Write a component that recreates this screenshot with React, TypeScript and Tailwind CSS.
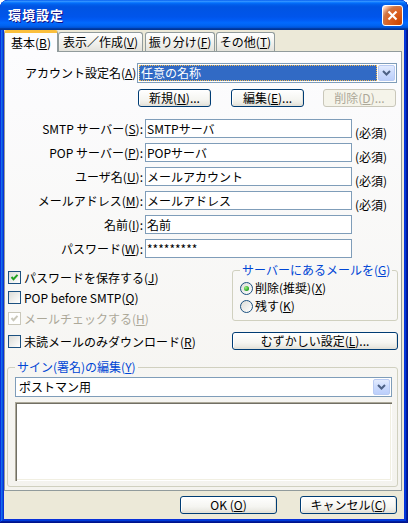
import React from "react";

const U = ({ c }: { c: string }) => <span className="underline underline-offset-[1px]">{c}</span>;

const Chevron = () => (
  <svg width="9" height="6" viewBox="0 0 9 6">
    <polyline points="1,1 4.5,4.5 8,1" fill="none" stroke="#4d6185" strokeWidth="2" />
  </svg>
);

const DropBtn = () => (
  <div className="w-[17px] h-full rounded-[2px] border border-[#b9cbf3] bg-[linear-gradient(to_bottom,#e3ecfe,#cddcfd_45%,#bccffb)] flex items-center justify-center">
    <Chevron />
  </div>
);

const Btn = ({ children, w, disabled, cls = "" }: { children: React.ReactNode; w: string; disabled?: boolean; cls?: string }) => (
  <div
    className={
      disabled
        ? `${w} ${cls} h-[18px] rounded-[3px] border border-[#c9c7ba] bg-[#f5f4ea] text-[#aca899] flex items-center justify-center leading-[14px] whitespace-nowrap`
        : `${w} ${cls} h-[18px] rounded-[3px] border border-[#003c74] bg-[linear-gradient(to_bottom,#ffffff,#f5f5f1_60%,#e9e8e1_88%,#d8d3c8)] shadow-[inset_-1px_-1px_#e3e2da,inset_1px_1px_#ffffff] flex items-center justify-center leading-[14px] whitespace-nowrap`
    }
  >
    {children}
  </div>
);

const Check = ({ checked, disabled }: { checked?: boolean; disabled?: boolean }) => (
  <div
    className={
      disabled
        ? "w-[13px] h-[13px] shrink-0 border border-[#cac8bb] bg-white flex items-center justify-center"
        : "w-[13px] h-[13px] shrink-0 border border-[#1c5180] bg-[linear-gradient(135deg,#dcdcd7,#ffffff)] flex items-center justify-center"
    }
  >
    {checked && (
      <svg width="11" height="11" viewBox="0 0 11 11">
        <polyline points="2.5,5 4.5,7.2 8.5,2.8" fill="none" stroke={disabled ? "#cac8bb" : "#21a121"} strokeWidth="2" />
      </svg>
    )}
  </div>
);

const Radio = ({ on }: { on?: boolean }) => (
  <div className="w-[13px] h-[13px] shrink-0 rounded-full border border-[#1c5180] bg-[linear-gradient(135deg,#dcdcd7,#ffffff)] flex items-center justify-center">
    {on && <div className="w-[5px] h-[5px] rounded-full bg-[radial-gradient(circle_at_35%_35%,#a0f080,#21a121_70%)]" />}
  </div>
);

const fields: { label: React.ReactNode; value: string; req: boolean }[] = [
  { label: <>SMTP サーバー(<U c="S" />):</>, value: "SMTPサーバ", req: true },
  { label: <>POP サーバー(<U c="P" />):</>, value: "POPサーバ", req: true },
  { label: <>ユーザ名(<U c="U" />):</>, value: "メールアカウント", req: true },
  { label: <>メールアドレス(<U c="M" />):</>, value: "メールアドレス", req: true },
  { label: <>名前(<U c="I" />):</>, value: "名前", req: false },
  { label: <>パスワード(<U c="W" />):</>, value: "*********", req: false },
];

export default function App() {
  return (
    <div className="w-[408px] h-[523px] flex flex-col bg-[#0831d9] rounded-t-[8px] overflow-hidden text-[12px] text-black font-['Noto_Sans_CJK_JP',sans-serif] shadow-[inset_-1px_-1px_#00138c,inset_1px_1px_#0831d9,inset_-2px_-2px_#001ea0,inset_2px_2px_#166aee,inset_-3px_-3px_#003bda,inset_3px_3px_#0855dd]">
      {/* Title bar */}
      <div className="h-[30px] shrink-0 flex items-center pl-[8px] pr-[5px] rounded-t-[8px] bg-[linear-gradient(to_bottom,#0058ee_0%,#3593ff_4%,#288eff_6%,#127dff_8%,#036ffc_10%,#0262ee_14%,#0057e5_20%,#0054e3_24%,#0055eb_56%,#005bf5_66%,#026afe_76%,#0062ef_86%,#0052d6_92%,#0040ab_94%,#003092_100%)]">
        <div className="text-white font-bold text-[13px] leading-[16px] tracking-[1px] [text-shadow:1px_1px_#0f1089]">環境設定</div>
        <div className="ml-auto w-[21px] h-[21px] rounded-[3px] border border-white bg-[radial-gradient(circle_at_90%_90%,#cc4600_0%,#dc6527_55%,#cd7546_70%,#ffccb2_90%,#ffffff_100%)] flex items-center justify-center">
          <svg width="13" height="13" viewBox="0 0 13 13">
            <line x1="2.5" y1="2.5" x2="10.5" y2="10.5" stroke="white" strokeWidth="2.2" />
            <line x1="10.5" y1="2.5" x2="2.5" y2="10.5" stroke="white" strokeWidth="2.2" />
          </svg>
        </div>
      </div>

      {/* Body */}
      <div className="flex-1 mx-[4px] mb-[4px] bg-[#ece9d8] flex flex-col pr-[2px]">
        {/* Tabs */}
        <div className="h-[21px] shrink-0 flex items-end">
          <div className="relative z-10 h-[22px] mb-[-1px] w-[54px] flex items-center justify-center border-x border-[#919b9c] border-t-[3px] border-t-[#fbbf3c] rounded-t-[3px] bg-[#fcfcfe] whitespace-nowrap leading-[14px]">
            基本(<U c="B" />)
          </div>
          <div className="h-[19px] w-[85px] flex items-center justify-center border-x border-t border-[#919b9c] rounded-t-[3px] bg-[linear-gradient(to_bottom,#ffffff,#f3f3ef_50%,#e3e2db)] whitespace-nowrap leading-[14px]">
            表示／作成(<U c="V" />)
          </div>
          <div className="ml-[2px] h-[19px] w-[70px] flex items-center justify-center border-x border-t border-[#919b9c] rounded-t-[3px] bg-[linear-gradient(to_bottom,#ffffff,#f3f3ef_50%,#e3e2db)] whitespace-nowrap leading-[14px]">
            振り分け(<U c="F" />)
          </div>
          <div className="ml-[1px] h-[19px] w-[59px] flex items-center justify-center border-x border-t border-[#919b9c] rounded-t-[3px] bg-[linear-gradient(to_bottom,#ffffff,#f3f3ef_50%,#e3e2db)] whitespace-nowrap leading-[14px]">
            その他(<U c="T" />)
          </div>
        </div>

        {/* Panel */}
        <div className="h-[440px] shrink-0 border border-[#919b9c] bg-[linear-gradient(to_bottom,#fcfcfe,#f4f3ee)] flex flex-col">
          {/* Account row */}
          <div className="mt-[11px] h-[20px] flex pl-[20px]">
            <div className="w-[112px] flex items-center whitespace-nowrap leading-[14px]">
              アカウント設定名(<U c="A" />)
            </div>
            <div className="w-[260px] h-[20px] border border-[#7f9db9] bg-white flex p-[1px] gap-[1px]">
              <div className="flex-1 bg-[#316ac5] border border-dotted border-[#f0b850] text-white flex items-center pl-[1px] leading-[14px]">
                任意の名称
              </div>
              <DropBtn />
            </div>
          </div>

          {/* Buttons row */}
          <div className="mt-[6px] h-[18px] flex pl-[133px]">
            <Btn w="w-[73px]">新規(<U c="N" />)...</Btn>
            <Btn w="w-[73px]" cls="ml-[20px]">編集(<U c="E" />)...</Btn>
            <Btn w="w-[73px]" cls="ml-[19px]" disabled>削除(<U c="D" />)...</Btn>
          </div>

          {/* Fields */}
          <div className="mt-[12px] flex flex-col gap-[5px]">
            {fields.map((f, i) => (
              <div key={i} className="h-[19px] flex items-start">
                <div className="w-[140px] h-[19px] flex items-center justify-end pr-[2px] whitespace-nowrap leading-[14px]">
                  {f.label}
                </div>
                <div className="w-[207px] h-[19px] border border-[#7f9db9] bg-white flex items-center pl-[1px] leading-[14px]">
                  {f.value}
                </div>
                {f.req && <div className="ml-[3px] mt-[6px] leading-[16px] whitespace-nowrap">(必須)</div>}
              </div>
            ))}
          </div>

          {/* Checkboxes + server group */}
          <div className="flex">
            <div className="flex-1 pl-[3px] flex flex-col">
              <div className="mt-[13px] h-[13px] flex items-center gap-[3px] whitespace-nowrap leading-[14px]">
                <Check checked />
                <span>パスワードを保存する(<U c="J" />)</span>
              </div>
              <div className="mt-[7px] h-[13px] flex items-center gap-[3px] whitespace-nowrap leading-[14px]">
                <Check />
                <span>POP before SMTP(<U c="Q" />)</span>
              </div>
              <div className="mt-[8px] h-[13px] flex items-center gap-[3px] whitespace-nowrap leading-[14px] text-[#aca899]">
                <Check checked disabled />
                <span>メールチェックする(<U c="H" />)</span>
              </div>
              <div className="mt-[10px] h-[13px] flex items-center gap-[3px] whitespace-nowrap leading-[14px]">
                <Check />
                <span>未読メールのみダウンロード(<U c="R" />)</span>
              </div>
            </div>
            <div className="w-[166px] mr-[3px] flex flex-col">
              <fieldset className="mt-[5px] border border-[#d0d0bf] rounded-[3px] pl-[7px] pb-[6px] min-w-0">
                <legend className="px-[2px] leading-[14px] text-[#0046d5] whitespace-nowrap">
                  サーバーにあるメールを(<U c="G" />)
                </legend>
                <div className="mt-[3px] h-[16px] flex items-center gap-[2px] whitespace-nowrap leading-[14px]">
                  <Radio on />
                  <span>削除(推奨)(<U c="X" />)</span>
                </div>
                <div className="mt-[2px] h-[16px] flex items-center gap-[2px] whitespace-nowrap leading-[14px]">
                  <Radio />
                  <span>残す(<U c="K" />)</span>
                </div>
              </fieldset>
              <Btn w="w-full" cls="mt-[11px]">むずかしい設定(<U c="L" />)...</Btn>
            </div>
          </div>

          {/* Signature group */}
          <fieldset className="mt-[10px] ml-[2px] mr-[3px] border border-[#d0d0bf] rounded-[3px] pl-[7px] pb-[5px] min-w-0">
            <legend className="px-[2px] leading-[14px] text-[#0046d5] whitespace-nowrap">
              サイン(署名)の編集(<U c="Y" />)
            </legend>
            <div className="mt-[3px] w-[377px] h-[20px] border border-[#7f9db9] bg-white flex p-[1px]">
              <div className="flex-1 flex items-center pl-[2px] leading-[14px]">ポストマン用</div>
              <DropBtn />
            </div>
            <div className="mt-[5px] w-[377px] h-[79px] bg-white shadow-[inset_1px_1px_#aca899,inset_2px_2px_#716f64,inset_-1px_-1px_#ffffff,inset_-2px_-2px_#f1efe2]" />
          </fieldset>
        </div>

        {/* Bottom buttons */}
        <div className="mt-[5px] h-[18px] flex justify-end pr-[5px] gap-[23px]">
          <Btn w="w-[97px]">OK (<U c="O" />)</Btn>
          <Btn w="w-[97px]">キャンセル(<U c="C" />)</Btn>
        </div>
      </div>
    </div>
  );
}
